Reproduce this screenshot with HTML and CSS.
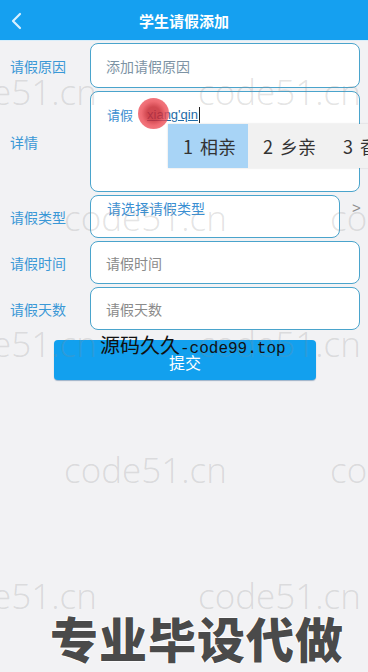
FILE: index.html
```html
<!DOCTYPE html>
<html lang="zh">
<head>
<meta charset="utf-8">
<title>学生请假添加</title>
<link rel="stylesheet" href="styles.css">
</head>
<body>
<div class="app">
  <header class="topbar">
    <span class="back">
      <svg width="12" height="18" viewBox="0 0 12 18"><path d="M10 2 L3 9 L10 16" fill="none" stroke="#d8f0ff" stroke-width="2.2" stroke-linecap="round" stroke-linejoin="round"/></svg>
    </span>
    <h1 class="title">学生请假添加</h1>
    <span></span>
  </header>

  <form class="form">
    <div class="row">
      <label class="label">请假原因</label>
      <div class="field field-h44"><span class="ph ph-reason">添加请假原因</span></div>
    </div>
    <div class="row">
      <label class="label">详情</label>
      <div class="field field-area"><span class="typed">请假<span class="comp">xiang'qin</span><span class="caret"></span></span></div>
    </div>
    <div class="row">
      <label class="label">请假类型</label>
      <div class="select-wrap">
        <div class="field field-select"><span class="select-text">请选择请假类型</span></div>
        <span class="chev">&gt;</span>
      </div>
    </div>
    <div class="row">
      <label class="label">请假时间</label>
      <div class="field field-h43"><span class="ph">请假时间</span></div>
    </div>
    <div class="row">
      <label class="label">请假天数</label>
      <div class="field field-h43"><span class="ph">请假天数</span></div>
    </div>
    <div class="actions">
      <button type="button" class="submit">提交</button>
    </div>
  </form>

  <div class="ime">
    <span class="cand cand-on">1 相亲</span>
    <span class="cand">2 乡亲</span>
    <span class="cand">3 香</span>
  </div>
  <div class="touch"></div>

  <div class="wm-layer">
    <span class="wm wm-a1">code51.cn</span>
    <span class="wm wm-a2">code51.cn</span>
    <span class="wm wm-b1">code51.cn</span>
    <span class="wm wm-b2">code51.cn</span>
    <span class="wm wm-c1">code51.cn</span>
    <span class="wm wm-c2">code51.cn</span>
    <span class="wm wm-d1">code51.cn</span>
    <span class="wm wm-d2">code51.cn</span>
    <span class="wm wm-e1">code51.cn</span>
    <span class="wm wm-e2">code51.cn</span>
  </div>
  <div class="stamp">源码久久<span class="stamp-mono">-code99.top</span></div>
  <div class="promo">专业毕设代做</div>
</div>
</body>
</html>
```

FILE: styles.css
```css
* { box-sizing: border-box; }
html, body { margin: 0; padding: 0; }
body {
  width: 368px;
  height: 672px;
  overflow: hidden;
  background: #f2f2f4;
  font-family: "Noto Sans CJK SC", "Noto Sans", sans-serif;
}
.app {
  position: relative;
  width: 368px;
  height: 672px;
}
.topbar {
  height: 41px;
  background: #15a0f0;
  display: grid;
  grid-template-columns: 40px 1fr 40px;
  align-items: center;
  border-bottom: 1px solid #d9eefa;
}
.back {
  display: flex;
  align-items: center;
  padding-left: 10px;
  padding-top: 1px;
}
.title {
  margin: 0;
  text-align: center;
  color: #ffffff;
  font-size: 15px;
  font-weight: 700;
  line-height: 1;
}
.form {
  padding: 2px 8px 0 0;
  display: flex;
  flex-direction: column;
  gap: 3px;
}
.row {
  display: flex;
  align-items: center;
}
.label {
  flex: 0 0 90px;
  padding-left: 10px;
  color: #3a98d6;
  font-size: 14px;
}
.field {
  flex: 1;
  background: #ffffff;
  border: 1px solid #4aa4cc;
  border-radius: 8px;
  display: flex;
  align-items: center;
  padding-left: 15px;
  font-size: 14px;
}
.field-h44 { height: 45px; }
.field-h43 { height: 43px; }
.field-area {
  height: 101px;
  align-items: flex-start;
  padding-top: 13px;
  padding-left: 16px;
}
.select-wrap {
  flex: 1;
  display: flex;
  align-items: flex-start;
  min-width: 0;
}
.field-select {
  flex: 0 0 250px;
  height: 43px;
  align-items: flex-start;
  padding-top: 2px;
  padding-left: 16px;
}
.chev {
  margin-left: 12px;
  margin-top: 4px;
  color: #8d8d8d;
  font-size: 15px;
  font-family: "Liberation Sans", sans-serif;
}
.ph { color: #8a8a8a; }
.ph-reason { color: #7d93a4; }
.select-text { color: #3a8fd2; }
.typed {
  color: #3b8ed0;
  font-size: 13px;
  display: inline-flex;
  align-items: center;
}
.comp {
  color: #1f6ca8;
  text-decoration: underline;
  margin-left: 14px;
  font-family: "Liberation Sans", sans-serif;
}
.caret {
  display: inline-block;
  width: 1px;
  height: 16px;
  background: #222;
  margin-left: 1px;
}
.actions {
  padding-top: 7px;
  padding-left: 54px;
}
.submit {
  width: 262px;
  height: 40px;
  border: none;
  border-radius: 4px;
  background: #12a0ee;
  color: #ffffff;
  font-size: 16px;
  font-family: "Noto Sans CJK SC", sans-serif;
  padding-top: 4px;
  box-shadow: 0 1px 1px rgba(0, 60, 120, 0.35);
}
.ime {
  position: absolute;
  left: 168px;
  top: 124px;
  width: 210px;
  height: 44px;
  background: #f1f1f1;
  display: flex;
  align-items: stretch;
  font-size: 18px;
  color: #333;
  box-shadow: 0 0 2px rgba(0, 0, 0, 0.15);
}
.cand {
  display: flex;
  align-items: center;
  padding: 0 12px 0 15px;
  white-space: nowrap;
  word-spacing: 3px;
}
.cand-on {
  background: #a8d4f6;
  width: 80px;
}
.touch {
  position: absolute;
  left: 138px;
  top: 98px;
  width: 31px;
  height: 31px;
  border-radius: 50%;
  background: radial-gradient(circle, rgba(200, 40, 50, 0.85) 0 30%, rgba(235, 70, 80, 0.8) 55%, rgba(240, 90, 100, 0.7) 100%);
}
.wm-layer {
  position: absolute;
  inset: 0;
  overflow: hidden;
  pointer-events: none;
}
.wm {
  position: absolute;
  font-family: "Open Sans", "Liberation Sans", sans-serif;
  font-weight: 300;
  font-size: 35px;
  line-height: 40px;
  color: rgba(140, 140, 140, 0.24);
  white-space: nowrap;
}
.wm-a1 { left: -66px; top: 72px; }
.wm-a2 { left: 198px; top: 72px; }
.wm-b1 { left: 64px; top: 198px; }
.wm-b2 { left: 330px; top: 198px; }
.wm-c1 { left: -66px; top: 324px; }
.wm-c2 { left: 198px; top: 324px; }
.wm-d1 { left: 64px; top: 450px; }
.wm-d2 { left: 330px; top: 450px; }
.wm-e1 { left: -66px; top: 576px; }
.wm-e2 { left: 198px; top: 576px; }
.stamp {
  position: absolute;
  left: 100px;
  top: 333px;
  font-size: 20px;
  line-height: 24px;
  color: #111;
  white-space: nowrap;
}
.stamp-mono {
  font-family: "Liberation Mono", monospace;
  font-size: 16px;
}
.promo {
  position: absolute;
  left: 0;
  width: 368px;
  top: 608px;
  text-align: center;
  font-size: 48px;
  line-height: 58px;
  font-weight: 900;
  color: #4a4a4a;
  -webkit-text-stroke: 1px #ffffff;
  paint-order: stroke fill;
  text-shadow: 0 0 2px #fff, 0 0 2px #fff;
  letter-spacing: 1px;
  padding-left: 26px;
}
```
